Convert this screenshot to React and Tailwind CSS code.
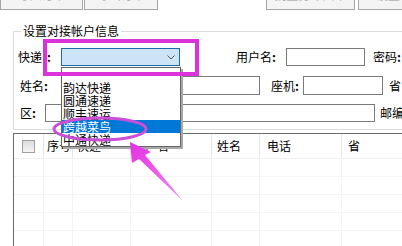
import React from "react";

// Columns of the account grid: width in px (incl. right border) and header label
const columns = [
  { w: "w-[30px]", pl: "pl-[8px]", label: null },
  { w: "w-[29px]", pl: "pl-[3px]", label: "序号" },
  { w: "w-[58px]", pl: "pl-[4px]", label: "快递" },
  { w: "w-[81px]", pl: "pl-[2px]", label: "用户名" },
  { w: "w-[48px]", pl: "pl-[5px]", label: "姓名" },
  { w: "w-[82px]", pl: "pl-[7px]", label: "电话" },
  { w: "w-[90px]", pl: "pl-[6px]", label: "省" },
];

const expressList = ["", "韵达快递", "圆通速递", "顺丰速运", "跨越菜鸟", "中通快递"];

const TextBox = ({ className }) => (
  <div className={`h-full border border-[#7a7a7a] bg-white flex-none ${className}`} />
);

export default function App() {
  return (
    <div
      className="relative w-[402px] h-[246px] overflow-hidden bg-white text-[12px] leading-[12px] text-black"
      style={{ fontFamily: '"Noto Sans CJK SC", "Noto Sans", sans-serif' }}
    >
      {/* toolbar buttons, cut off at the top */}
      <div className="flex h-[10px] items-end">
        <div className="flex-none w-[83px] h-[22px] mt-[-12px] border border-[#a6a6a6] bg-[#f4f4f4] text-[#b5b5b5] flex items-center justify-center pb-[8px]">导入订单</div>
        <div className="flex-none w-[74px] h-[22px] mt-[-12px] ml-[1px] border border-[#a6a6a6] bg-[#f4f4f4] text-[#b5b5b5] flex items-center justify-center pb-[8px]">导出订单</div>
        <div className="flex-none w-[89px] h-[22px] mt-[-12px] ml-[108px] border border-[#a6a6a6] bg-[#f4f4f4] text-[#b5b5b5] flex items-center justify-center pb-[8px]">批量打印面单</div>
        <div className="flex-none w-[60px] h-[22px] mt-[-12px] ml-[3px] border border-[#a6a6a6] bg-[#f4f4f4] text-[#b5b5b5] flex items-center justify-center pb-[8px]">设置</div>
      </div>

      {/* group box: 设置对接帐户信息 */}
      <div className="ml-[13px] mt-[21px] w-[430px] border border-r-0 border-[#dcdcdc] pb-[7px]">
        <div className="mt-[-7px] ml-[7px] w-fit bg-white px-[2px] h-[12px] whitespace-nowrap">设置对接帐户信息</div>

        {/* row 1 */}
        <div className="mt-[11px] flex items-center h-[18px] whitespace-nowrap">
          <span className="flex-none w-[47px] pl-[4px]">快递<span className="ml-[5px] font-bold">:</span></span>
          <div className="flex-none w-[119px] h-full border border-[#1c6aa8] bg-[#cce4f7] flex items-center justify-end pr-[4px]">
            <svg width="8" height="5" viewBox="0 0 8 5">
              <polyline points="0.5,0.5 4,4 7.5,0.5" fill="none" stroke="#555" strokeWidth="1" />
            </svg>
          </div>
          <span className="flex-none ml-[56px] w-[50px]">用户名<span className="font-bold">:</span></span>
          <TextBox className="w-[79px] h-[19px]" />
          <span className="flex-none ml-[8px]">密码<span className="font-bold">:</span></span>
        </div>

        {/* row 2 */}
        <div className="mt-[10px] flex items-center h-[19px] whitespace-nowrap">
          <span className="flex-none w-[47px] pl-[6px]">姓名<span className="font-bold">:</span></span>
          <TextBox className="w-[199px]" />
          <span className="flex-none ml-[11px] w-[32px]">座机<span className="font-bold">:</span></span>
          <TextBox className="w-[80px]" />
          <span className="flex-none ml-[6px]">省</span>
        </div>

        {/* row 3 */}
        <div className="mt-[9px] flex items-center h-[18px] whitespace-nowrap">
          <span className="flex-none w-[31px] pl-[6px]">区<span className="font-bold">:</span></span>
          <TextBox className="w-[330px]" />
          <span className="flex-none ml-[5px]">邮编</span>
        </div>
      </div>

      {/* grid */}
      <div className="ml-[13px] mt-[3px] w-[430px] border-l border-t border-[#6e6e6e]">
        <div className="flex h-[25px] border-b border-[#f0f0f0]">
          {columns.map((c, i) => (
            <div key={i} className={`flex-none ${c.w} ${c.pl} h-full border-r border-[#e6e6e6] flex items-center whitespace-nowrap overflow-hidden`}>
              {c.label === null ? (
                <div className="w-[13px] h-[13px] border border-[#a0a0a0] bg-gradient-to-b from-[#dcdcdc] to-[#f4f4f4]" />
              ) : (
                c.label
              )}
            </div>
          ))}
        </div>
        {[0, 1, 2, 3, 4].map((r) => (
          <div key={r} className="flex h-[18px] border-b border-[#f4f4f4]">
            {columns.map((c, i) => (
              <div key={i} className={`flex-none ${c.w} h-full border-r border-[#f4f4f4]`} />
            ))}
          </div>
        ))}
      </div>

      {/* opened combobox list */}
      <div className="absolute left-[61px] top-[67px] w-[120px] border border-[#646464] bg-white shadow-[2px_2px_0_#a8a8a8]">
        {expressList.map((name, i) => (
          <div
            key={i}
            className={`h-[13px] leading-[13px] pl-[1px] whitespace-nowrap ${name === "跨越菜鸟" ? "bg-[#0078d7] text-white" : ""}`}
          >
            {name}
          </div>
        ))}
      </div>

      {/* magenta annotations */}
      <svg className="absolute left-0 top-0 pointer-events-none" width="402" height="246" viewBox="0 0 402 246">
        <defs>
          <linearGradient id="arrowFade" x1="130" y1="142" x2="183" y2="201" gradientUnits="userSpaceOnUse">
            <stop offset="0" stopColor="#e52ee5" />
            <stop offset="1" stopColor="#f08cf0" />
          </linearGradient>
        </defs>
        <rect x="45" y="41" width="152" height="33" fill="none" stroke="#dc32dc" strokeWidth="4" />
        <ellipse cx="100" cy="129" rx="46" ry="11" fill="none" stroke="#cc4fd8" strokeWidth="3" />
        <polygon points="130,142 151,152 145,155 183,201 139,159 132,163" fill="url(#arrowFade)" />
      </svg>
    </div>
  );
}
